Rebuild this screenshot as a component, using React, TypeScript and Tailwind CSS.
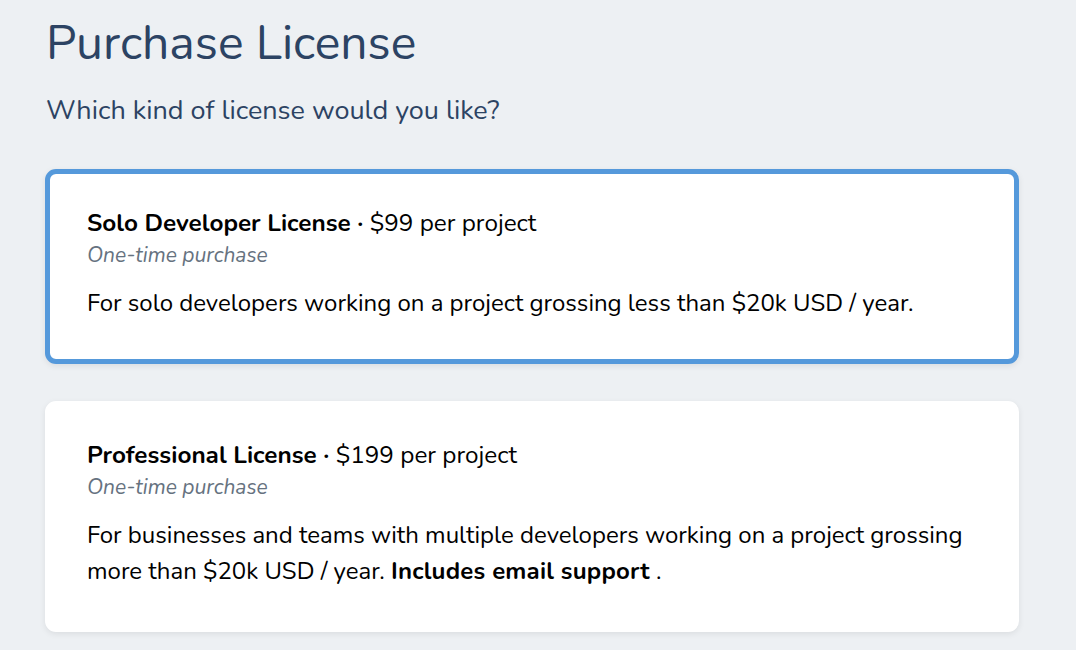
import React from "react";

const LICENSES = [
  {
    id: "solo",
    name: "Solo Developer License",
    price: "$99 per project",
    note: "One-time purchase",
    selected: true,
    body: <>For solo developers working on a project grossing less than $20k USD / year.</>,
  },
  {
    id: "pro",
    name: "Professional License",
    price: "$199 per project",
    note: "One-time purchase",
    selected: false,
    body: (
      <>
        For businesses and teams with multiple developers working on a project grossing more than $20k USD / year.{" "}
        <strong className="font-bold tracking-[0.2px]">Includes email support</strong> .
      </>
    ),
  },
];

export default function App() {
  return (
    <div
      className="min-h-screen bg-[#edf0f3] pl-[45px] pt-[15px] pb-10"
      style={{ fontFamily: "Nunito, Lato, 'Noto Sans', sans-serif" }}
    >
      <h1 className="pl-px text-[48px] leading-[1.2] font-normal text-[#2c4363]">Purchase License</h1>
      <p className="mt-[20px] pl-px text-[27px] leading-[36px] text-[#2c4363]">Which kind of license would you like?</p>

      <div className="mt-[40px] flex w-[974px] flex-col gap-[37px]">
        {LICENSES.map((l) => (
          <div
            key={l.id}
            className={`rounded-[11px] border-[5px] bg-white px-[37px] pt-[33px] pb-[38px] shadow-[0_2px_6px_rgba(0,0,0,0.08)] ${
              l.selected ? "border-[#5599db]" : "border-white"
            }`}
          >
            <div className="text-[24.3px] leading-[32px] text-black">
              <span className="font-bold">{l.name} ·</span> {l.price}
            </div>
            <div className="text-[21px] italic leading-[32px] text-[#66727f]">{l.note}</div>
            <p className="mt-[14px] text-[24px] leading-[36px] text-black">{l.body}</p>
          </div>
        ))}
      </div>
    </div>
  );
}
